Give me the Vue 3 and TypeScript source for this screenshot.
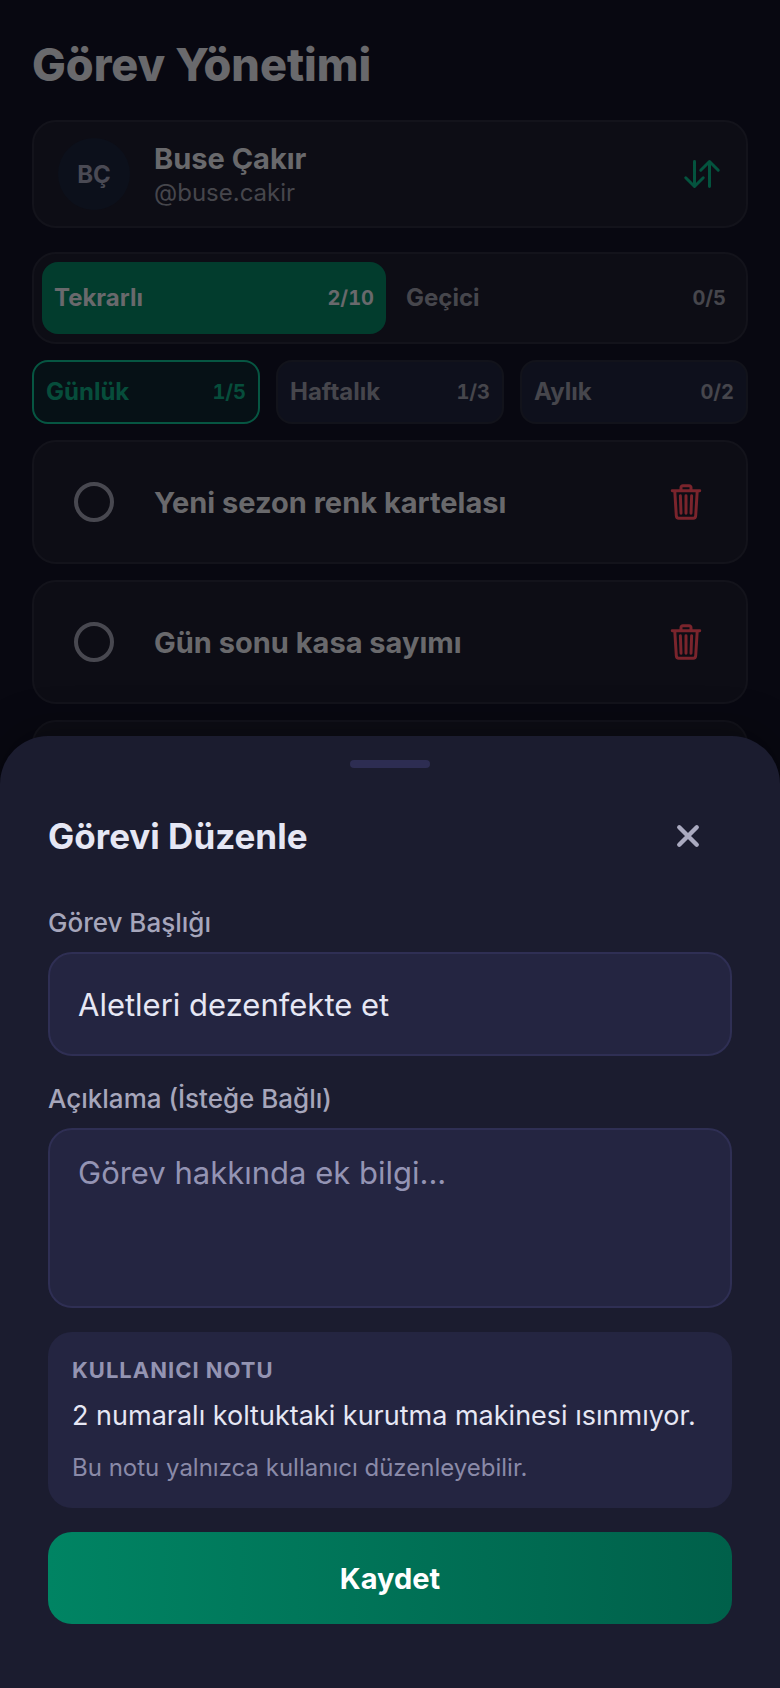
<script setup lang="ts">
import { ref } from 'vue'

interface Tab {
  id: string
  label: string
  count: string
}

interface Task {
  id: number
  title: string
}

const user = { initials: 'BÇ', name: 'Buse Çakır', handle: '@buse.cakir' }

const kinds: Tab[] = [
  { id: 'recurring', label: 'Tekrarlı', count: '2/10' },
  { id: 'temporary', label: 'Geçici', count: '0/5' },
]

const periods: Tab[] = [
  { id: 'daily', label: 'Günlük', count: '1/5' },
  { id: 'weekly', label: 'Haftalık', count: '1/3' },
  { id: 'monthly', label: 'Aylık', count: '0/2' },
]

const tasks: Task[] = [
  { id: 1, title: 'Yeni sezon renk kartelası' },
  { id: 2, title: 'Gün sonu kasa sayımı' },
]

const activeKind = ref('recurring')
const activePeriod = ref('daily')
const title = ref('Aletleri dezenfekte et')
const description = ref('')
</script>

<template>
  <div class="screen">
    <main class="page">
      <h1 class="page-title">Görev Yönetimi</h1>

      <section class="card user">
        <span class="avatar">{{ user.initials }}</span>
        <div class="user-text">
          <span class="user-name">{{ user.name }}</span>
          <span class="user-handle">{{ user.handle }}</span>
        </div>
        <button class="icon-button swap" type="button" aria-label="Kullanıcı değiştir">
          <svg viewBox="0 0 512 512" aria-hidden="true">
            <path d="M464 208L352 96 240 208M352 113V416M48 304l112 112 112-112M160 398V96" />
          </svg>
        </button>
      </section>

      <nav class="card kinds">
        <button
          v-for="kind in kinds"
          :key="kind.id"
          type="button"
          class="kind"
          :class="{ active: kind.id === activeKind }"
          @click="activeKind = kind.id"
        >
          <span>{{ kind.label }}</span>
          <span class="count">{{ kind.count }}</span>
        </button>
      </nav>

      <nav class="periods">
        <button
          v-for="period in periods"
          :key="period.id"
          type="button"
          class="period"
          :class="{ active: period.id === activePeriod }"
          @click="activePeriod = period.id"
        >
          <span>{{ period.label }}</span>
          <span class="count">{{ period.count }}</span>
        </button>
      </nav>

      <ul class="tasks">
        <li v-for="task in tasks" :key="task.id" class="card task">
          <span class="task-check">
            <input :id="`task-${task.id}`" type="checkbox" />
          </span>
          <label class="task-title" :for="`task-${task.id}`">{{ task.title }}</label>
          <button class="icon-button trash" type="button" aria-label="Görevi sil">
            <svg viewBox="0 0 512 512" aria-hidden="true">
              <path
                d="M112 112l20 320c.95 18.49 14.4 32 32 32h184c17.67 0 30.87-13.51 32-32l20-320M80 112h352M192 112V72a23.93 23.93 0 0124-24h80a23.93 23.93 0 0124 24v40M256 176v224M184 176l8 224M328 176l-8 224"
              />
            </svg>
          </button>
        </li>
        <li class="card task" aria-hidden="true"></li>
      </ul>
    </main>

    <div class="backdrop"></div>

    <section class="sheet" role="dialog" aria-labelledby="sheet-title">
      <span class="handle"></span>
      <header class="sheet-header">
        <h2 id="sheet-title">Görevi Düzenle</h2>
        <button class="close" type="button" aria-label="Kapat">
          <svg viewBox="0 0 512 512" aria-hidden="true">
            <path d="M144 144l224 224M368 144L144 368" />
          </svg>
        </button>
      </header>

      <form class="form" @submit.prevent>
        <div class="field">
          <label for="task-name">Görev Başlığı</label>
          <input id="task-name" v-model="title" class="control" type="text" />
        </div>
        <div class="field">
          <label for="task-description">Açıklama (İsteğe Bağlı)</label>
          <textarea
            id="task-description"
            v-model="description"
            class="control area"
            placeholder="Görev hakkında ek bilgi..."
          ></textarea>
        </div>
        <div class="note">
          <h3>KULLANICI NOTU</h3>
          <p class="note-text">2 numaralı koltuktaki kurutma makinesi ısınmıyor.</p>
          <p class="note-hint">Bu notu yalnızca kullanıcı düzenleyebilir.</p>
        </div>
        <button class="save" type="submit">Kaydet</button>
      </form>
    </section>
  </div>
</template>

<style>
html,
body {
  background: #090912;
}
</style>

<style scoped>
* {
  box-sizing: border-box;
}

.screen {
  position: relative;
  height: 100vh;
  overflow: hidden;
  background: #111122;
  color: #d2d2d8;
  font-family: Inter, 'Liberation Sans', sans-serif;
}

button {
  margin: 0;
  padding: 0;
  border: 0;
  background: none;
  color: inherit;
  font: inherit;
  cursor: pointer;
}

h1,
h2,
h3,
p,
ul {
  margin: 0;
  padding: 0;
}

svg {
  display: block;
  width: 40px;
  height: 40px;
  fill: none;
  stroke: currentColor;
  stroke-width: 38;
  stroke-linecap: round;
  stroke-linejoin: round;
}

.page {
  padding: 36px 32px 0;
}

.page-title {
  margin-bottom: 26px;
  font-size: 45px;
  line-height: 58px;
  font-weight: 800;
}

.card {
  border: 2px solid #262636;
  border-radius: 24px;
  background: #1a1a2a;
}

.user {
  display: flex;
  align-items: center;
  gap: 24px;
  padding: 16px 24px;
}

.avatar {
  display: grid;
  place-items: center;
  width: 72px;
  height: 72px;
  border-radius: 50%;
  background: #182036;
  color: #9494a8;
  font-size: 24px;
  font-weight: 700;
}

.user-text {
  display: flex;
  flex: 1;
  flex-direction: column;
}

.user-name {
  font-size: 29px;
  line-height: 38px;
  font-weight: 700;
}

.user-handle {
  color: #8c8c98;
  font-size: 24px;
  line-height: 30px;
}

.icon-button {
  display: grid;
  place-items: center;
}

.swap {
  color: #08a67c;
}

.kinds {
  display: grid;
  grid-template-columns: 1fr 1fr;
  gap: 8px;
  margin-top: 24px;
  padding: 8px;
}

.kind,
.period {
  display: flex;
  align-items: center;
  justify-content: space-between;
  padding: 0 12px 2px;
  border-radius: 16px;
  color: #8c8c98;
  font-size: 24px;
  font-weight: 700;
}

.kind {
  height: 72px;
}

.kind.active {
  background: #04785a;
  color: #d2d2d8;
}

.count {
  padding-top: 2px;
  font-size: 20px;
  font-variant-numeric: tabular-nums;
}

.periods {
  display: grid;
  grid-template-columns: repeat(3, 1fr);
  gap: 16px;
  margin-top: 16px;
}

.period {
  height: 64px;
  border: 2px solid #242636;
  background: #1d2138;
}

.period.active {
  border-color: #0cac84;
  background: #0d222c;
  color: #0c9a76;
}

.tasks {
  display: flex;
  flex-direction: column;
  gap: 16px;
  margin-top: 16px;
  list-style: none;
}

.task {
  display: flex;
  align-items: center;
  gap: 24px;
  min-height: 124px;
  padding: 24px;
}

.task-check {
  display: grid;
  place-items: center;
  width: 72px;
  height: 72px;
}

.task-check input {
  width: 40px;
  height: 40px;
  margin: 0;
  border: 4px solid #9090a0;
  border-radius: 50%;
  appearance: none;
}

.task-title {
  flex: 1;
  padding-top: 2px;
  font-size: 29px;
  line-height: 38px;
  font-weight: 700;
}

.trash {
  width: 72px;
  height: 72px;
  color: #f44858;
}

.backdrop {
  position: absolute;
  inset: 0;
  background: rgba(0, 0, 0, 0.5);
}

.sheet {
  position: absolute;
  right: 0;
  bottom: 0;
  left: 0;
  display: flex;
  flex-direction: column;
  padding: 24px 48px 64px;
  border-radius: 48px 48px 0 0;
  background: #1b1c2f;
  box-shadow: 0 -8px 40px rgba(0, 0, 0, 0.3);
  color: #e6e7f4;
}

.handle {
  align-self: center;
  width: 80px;
  height: 8px;
  border-radius: 4px;
  background: #2d2d52;
}

.sheet-header {
  display: flex;
  align-items: center;
  justify-content: space-between;
  margin: 24px 0 28px;
}

.sheet-header h2 {
  font-size: 35px;
  line-height: 44px;
  font-weight: 700;
}

.close {
  display: grid;
  place-items: center;
  width: 88px;
  height: 88px;
  color: #aaaac0;
}

.close svg {
  stroke-width: 56;
}

.form {
  display: flex;
  flex-direction: column;
  gap: 24px;
}

.field {
  display: flex;
  flex-direction: column;
  gap: 14px;
}

.field + .field {
  margin-top: 4px;
}

.field label {
  color: #a6a6bb;
  font-size: 26px;
  line-height: 30px;
  font-weight: 500;
}

.control {
  display: block;
  width: 100%;
  height: 104px;
  margin: 0;
  padding: 0 28px;
  border: 2px solid #2f2f54;
  border-radius: 24px;
  outline: 0;
  background: #242541;
  color: #e6e7f4;
  font: inherit;
  font-size: 31px;
  line-height: 38px;
}

.area {
  height: 180px;
  padding: 24px 28px;
  resize: none;
}

.control::placeholder {
  color: #9494b4;
  opacity: 1;
}

.note {
  padding: 24px;
  border-radius: 24px;
  background: #242541;
}

.note h3 {
  color: #9494b2;
  font-size: 22px;
  line-height: 28px;
  font-weight: 700;
  letter-spacing: 1px;
}

.note-text {
  margin-top: 12px;
  font-size: 27px;
  line-height: 40px;
}

.note-hint {
  margin-top: 16px;
  color: #8a8aa8;
  font-size: 24px;
  line-height: 32px;
}

.save {
  height: 92px;
  border-radius: 24px;
  background: linear-gradient(90deg, #008463, #00604a);
  color: #ffffff;
  font-size: 29px;
  font-weight: 700;
}
</style>
